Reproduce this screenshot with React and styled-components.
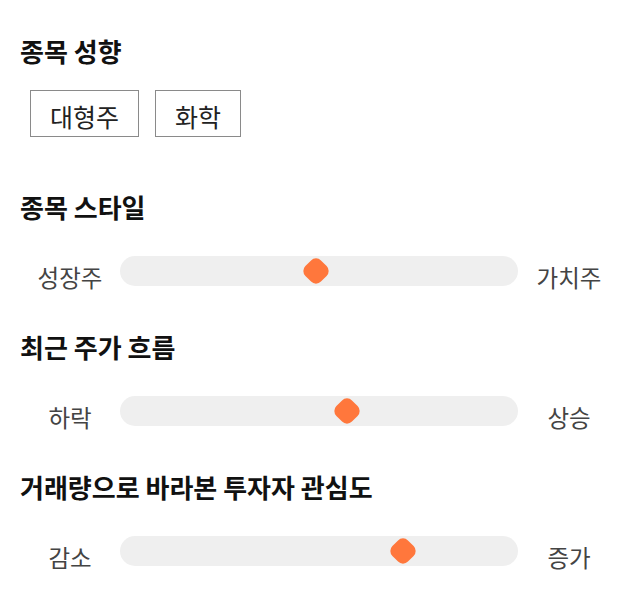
import React from "react";
import styled, { createGlobalStyle } from "styled-components";

const Global = createGlobalStyle`
  html, body { margin: 0; padding: 0; background: #fff; }
  body { font-family: "Noto Sans CJK KR", "Noto Sans", sans-serif; }
`;

const Page = styled.div`
  width: 640px;
  min-height: 606px;
  box-sizing: border-box;
  padding: 35px 20px 0 20px;
  display: flex;
  flex-direction: column;
`;

const Section = styled.section`
  display: flex;
  flex-direction: column;
  margin-top: ${(p) => p.$top || 0}px;
`;

const Heading = styled.h2`
  margin: 0;
  font-size: 26px;
  line-height: 32px;
  font-weight: 700;
  color: #111;
`;

const ChipRow = styled.div`
  display: flex;
  gap: 16px;
  margin-top: 23px;
  padding-left: 10px;
`;

const Chip = styled.div`
  height: 47px;
  box-sizing: border-box;
  border: 1px solid #8a8a8a;
  padding: 4px 19px 0 19px;
  display: flex;
  align-items: center;
  font-size: 25px;
  color: #222;
`;

const SliderRow = styled.div`
  display: grid;
  grid-template-columns: 100px 398px 102px;
  align-items: center;
  margin-top: 27px;
`;

const Label = styled.span`
  text-align: center;
  font-size: 23.5px;
  color: #444;
  line-height: 30px;
  padding-top: 12px;
`;

const Track = styled.div`
  position: relative;
  height: 30px;
  border-radius: 15px;
  background: #efefef;
`;

const Thumb = styled.div`
  position: absolute;
  top: 50%;
  width: 22px;
  height: 22px;
  background: #ff773c;
  border-radius: 7px;
  transform: translate(-50%, -50%) rotate(45deg);
`;

const sliders = [
  { title: "종목 스타일", left: "성장주", right: "가치주", value: 0.492 },
  { title: "최근 주가 흐름", left: "하락", right: "상승", value: 0.57 },
  { title: "거래량으로 바라본 투자자 관심도", left: "감소", right: "증가", value: 0.711 },
];

export default function App() {
  return (
    <>
      <Global />
      <Page>
        <Section>
          <Heading>종목 성향</Heading>
          <ChipRow>
            <Chip>대형주</Chip>
            <Chip>화학</Chip>
          </ChipRow>
        </Section>
        {sliders.map((s, i) => (
          <Section key={s.title} $top={i === 0 ? 54 : 39}>
            <Heading>{s.title}</Heading>
            <SliderRow>
              <Label>{s.left}</Label>
              <Track>
                <Thumb style={{ left: `${s.value * 100}%` }} />
              </Track>
              <Label>{s.right}</Label>
            </SliderRow>
          </Section>
        ))}
      </Page>
    </>
  );
}
